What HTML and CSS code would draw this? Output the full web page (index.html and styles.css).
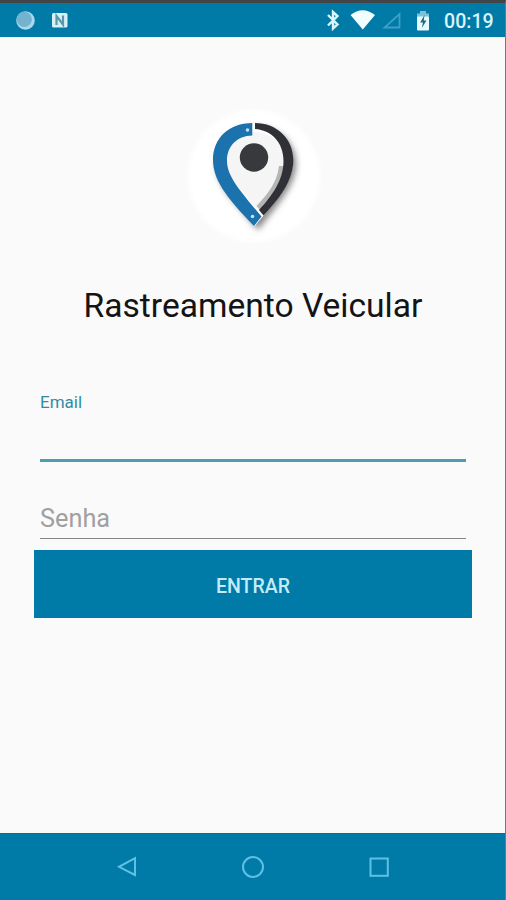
FILE: index.html
```
<!DOCTYPE html>
<html lang="pt-BR">
	<head>
		<meta charset="utf-8" />
		<title>Rastreamento Veicular</title>
		<link rel="stylesheet" href="styles.css">
	</head>
	<body>
		<div class="phone">
			<header class="status">
				<svg class="status-left" width="60" height="34" viewBox="0 0 60 34">
					<circle cx="15.5" cy="17.5" r="9.3" fill="#a9d9ed"/>
					<circle cx="14.3" cy="16.3" r="7.6" fill="#74b3d0"/>
					<rect x="42" y="10" width="15.500" height="14.500" rx="1.500" fill="#d6f1f7"/>
					<path d="M46.500 22V13L53 21.500V12.500" fill="none" stroke="#5a97a8" stroke-width="2.200"/>
				</svg>
				<div class="status-right">
					<svg width="112" height="34" viewBox="0 0 112 34">
						<path d="M5 12L14.500 21.500L10 25.500V9L14.500 13L5 22.500" fill="none" stroke="#d9f5fd" stroke-width="2.400"/>
						<path d="M27.500 12Q39.500 2.500 52 12L39.800 26.500Z" fill="#f1feff"/>
						<path d="M76.500 11V24.500H61.500Z" fill="none" stroke="#3fa0c6" stroke-width="1.800"/>
						<rect x="97" y="8" width="6" height="4" fill="#7dc0d8"/>
						<rect x="94" y="10.500" width="12" height="4" fill="#7dc0d8"/>
						<rect x="94" y="13.500" width="12" height="14" rx="1" fill="#e6fbff"/>
						<path d="M101.500 12L97.200 19.500H100L98.800 25L103.500 17.500H100.800Z" fill="#27677e"/>
					</svg>
					<span class="clock">00:19</span>
				</div>
			</header>

			<main class="login">
				<svg class="logo" width="150" height="150" viewBox="0 0 150 150">
					<defs>
						<filter id="soft" x="-30%" y="-30%" width="160%" height="160%">
							<feGaussianBlur stdDeviation="3"/>
						</filter>
						<filter id="edge">
							<feGaussianBlur stdDeviation="2"/>
						</filter>
					</defs>
					<circle cx="74" cy="76" r="66" fill="#fff" filter="url(#edge)"/>
					<path d="M76 27C98 27 116 42 116 64C116 85 98 104 78 130L48 94C40 82 37 74 37 64C37 42 54 27 76 27Z" fill="#858585" filter="url(#soft)"/>
					<path d="M73 23C96 23 113 39 113 61C113 83 96 101 74.500 126.500C48 97 33 78 33 60C33 39 50 23 73 23Z" fill="#fff"/>
					<path d="M73 32C92 32 106 45 106 62C106 80 93 96 79 111C60 91 46 76 46 62C46 45 58 34 73 32Z" fill="#f5f5f5"/>
					<path d="M99 66H104C103 84 92 99 82 112L76.500 106C87 95 97 83 99 66Z" fill="#b5b5b5"/>
					<!-- left half of the pin -->
					<path d="M72.300 23V35.500C57 36 47 46 47 61C47 77 62 93 81.500 116.500L74 126C45 96 33 79 33 60C33 38 49 23 72.300 23Z" fill="#1b72ad"/>
					<!-- right half of the pin -->
					<path d="M75 23C97 23 113.300 39 113.300 60C113.300 81 99 99 83.500 115.500L79 110C92 96 103.500 80 103.500 61C103.500 42 91 30 75 29Z" fill="#303136"/>
					<circle cx="74" cy="57.500" r="14.200" fill="#37393d"/>
					<circle cx="67.500" cy="30" r="1.800" fill="#bfe5f6"/>
					<circle cx="72.500" cy="116.500" r="1.800" fill="#bfe5f6"/>
				</svg>
				<h1 class="title">Rastreamento Veicular</h1>

				<div class="field field-active">
					<span class="label">Email</span>
				</div>
				<div class="field field-password">
					<span class="placeholder">Senha</span>
				</div>
				<button class="enter" type="button">ENTRAR</button>
			</main>

			<nav class="navbar">
				<svg width="26" height="26" viewBox="0 0 26 26">
					<path d="M21 4.200V21L5 12.800Z"/>
				</svg>
				<svg width="26" height="26" viewBox="0 0 26 26">
					<circle cx="13" cy="13" r="10"/>
				</svg>
				<svg width="26" height="26" viewBox="0 0 26 26">
					<rect x="4.500" y="4.500" width="17.300" height="17.300"/>
				</svg>
			</nav>
		</div>
	</body>
</html>
```
FILE: styles.css
```
*{
	box-sizing: border-box;
}
body{
	margin: 0;
	font-family: Roboto, "Liberation Sans", sans-serif;
}
.phone{
	width: 506px;
	height: 900px;
	display: flex;
	flex-direction: column;
	background: #fafafa;
	border-top: 3px solid #414547;
	border-right: 1px solid #737779;
	overflow: hidden;
}

/* status bar */
.status{
	height: 34px;
	display: flex;
	justify-content: space-between;
	background: #007aa6;
}
.status-left{
	margin-left: 10px;
}
.status-right{
	display: flex;
	padding-right: 11px;
}
.clock{
	width: 50px;
	margin-left: 9px;
	line-height: 38px;
	font-size: 19.6px;
	font-weight: 500;
	color: #d9f5fd;
	white-space: nowrap;
}

/* login form */
.login{
	flex: 1;
	display: flex;
	flex-direction: column;
	padding: 63px 33px 0 34px;
}
.logo{
	margin-left: 146px;
}
.title{
	margin: 35px 0 0;
	height: 40px;
	line-height: 41px;
	font-size: 33.6px;
	font-weight: 400;
	text-align: center;
	white-space: nowrap;
	color: #141414;
}
.field{
	margin: 0 6px;
}
.field-active{
	margin-top: 67px;
	height: 70px;
	border-bottom: 3px solid #4a9eb0;
}
.label{
	display: block;
	line-height: 21px;
	font-size: 17px;
	color: #338ba2;
}
.field-password{
	margin-top: 38px;
	height: 39px;
	border-bottom: 1px solid #858585;
}
.placeholder{
	display: block;
	line-height: 38px;
	font-size: 25.3px;
	color: #a0a0a0;
}
.enter{
	margin-top: 11px;
	height: 68px;
	padding: 4px 0 0;
	border: 0;
	background: #007aa6;
	color: #c3ebfa;
	font-family: inherit;
	font-size: 19.5px;
	font-weight: 500;
}

/* back, home, recents */
.navbar{
	height: 67px;
	display: flex;
	justify-content: center;
	align-items: center;
	gap: 100px;
	background: #007aa6;
	border-top: 1px solid #0b7189;
}
.navbar svg{
	fill: none;
	stroke: #5fc0e6;
	stroke-width: 2;
}
```
